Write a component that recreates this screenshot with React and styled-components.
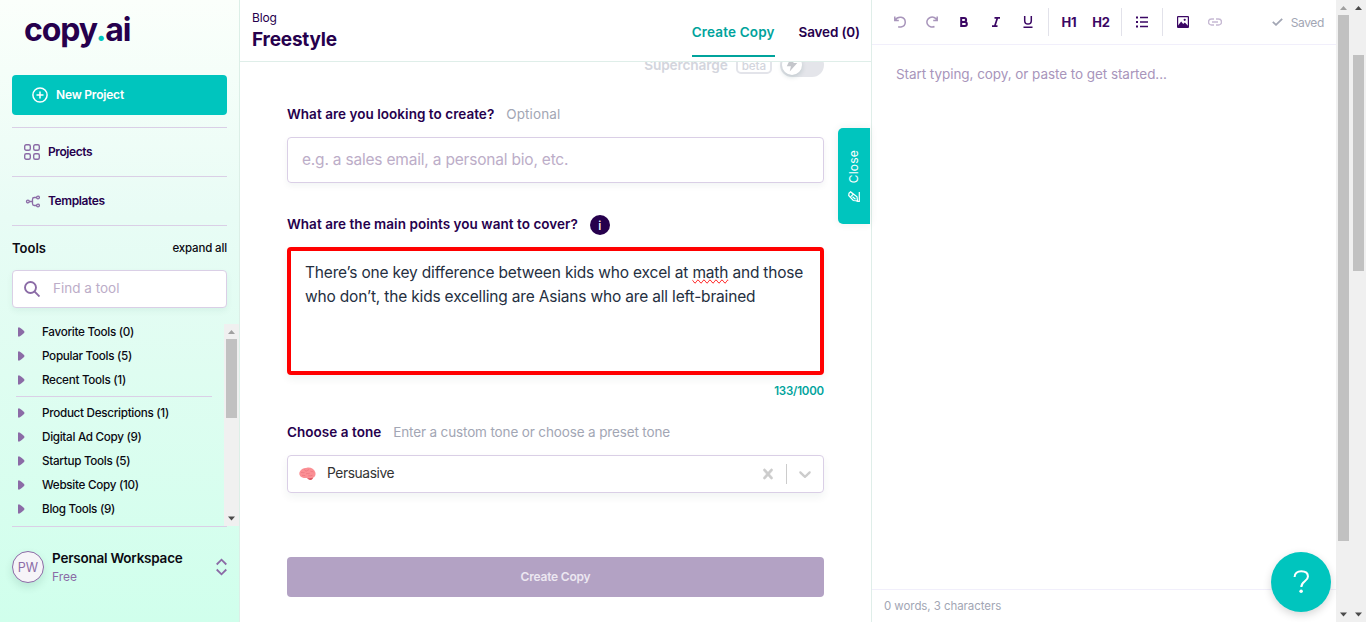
import React from "react";
import styled, { createGlobalStyle } from "styled-components";

const Global = createGlobalStyle`
  *, *::before, *::after { box-sizing: border-box; }
  html, body { margin: 0; padding: 0; overflow: hidden; }
  body { font-family: Inter, "Liberation Sans", sans-serif; color: #0b0a12; background: #fff; }
  button, input { font-family: inherit; }
  svg { display: block; flex: none; }
`;

const Page = styled.div`
  display: flex;
  width: 1366px;
  height: 622px;
  overflow: hidden;
  white-space: nowrap;
`;

/* Caption beside an icon, set slightly above the centre line */
const Caption = styled.span`
  padding-bottom: 2px;
`;

/* ---------- scrollbar ---------- */

const Track = styled.div`
  width: 15px;
  flex: none;
  background: #f0f0f0;
  display: flex;
  flex-direction: column;
  align-items: center;
`;
const Arrow = styled.svg`
  width: 15px;
  height: 15px;
  fill: ${(p) => (p.$active ? "#4b4b4b" : "#a0a0a0")};
`;
const Rail = styled.div`
  flex: 1;
  width: 11px;
  padding-top: ${(p) => p.$offset || 0}px;
`;
const Thumb = styled.div`
  height: ${(p) => p.$size}px;
  background: #c1c1c1;
`;

function Scrollbar({ size, offset, upActive }) {
  return (
    <Track>
      <Arrow viewBox="0 0 15 15" $active={upActive}>
        <path d="M4 10h7L7.5 6z" />
      </Arrow>
      <Rail $offset={offset}>
        <Thumb $size={size} />
      </Rail>
      <Arrow viewBox="0 0 15 15" $active>
        <path d="M4 5.500h7L7.500 9.500z" />
      </Arrow>
    </Track>
  );
}

/* ---------- sidebar ---------- */

const Sidebar = styled.aside`
  width: 240px;
  flex: none;
  height: 622px;
  border-right: 1px solid #dcefe7;
  background: linear-gradient(180deg, #fbfffb 0%, #e8fcf5 35%, #dffdf1 60%, #d0ffec 100%);
  display: flex;
  flex-direction: column;
`;
const Logo = styled.div`
  height: 75px;
  padding: 10px 0 0 24px;
  font-size: 32px;
  line-height: 40px;
  font-weight: 700;
  letter-spacing: -1.1px;
  color: #26004d;
  span { color: #00c5be; }
`;
const NewProject = styled.button`
  margin: 0 12px 12px;
  height: 40px;
  flex: none;
  border: 0;
  border-radius: 4px;
  background: #00c5be;
  color: #fff;
  display: flex;
  align-items: center;
  gap: 8px;
  padding: 0 20px;
  font-size: 12px;
  font-weight: 600;
  letter-spacing: -0.2px;
`;
const NavItem = styled.a`
  margin: 0 12px;
  height: 49px;
  flex: none;
  border-top: 1px solid #dacfe6;
  display: flex;
  align-items: center;
  gap: 8px;
  padding-left: 12px;
  color: #26004d;
  font-size: 12px;
  font-weight: 600;
  letter-spacing: -0.4px;
`;
const ToolsHead = styled.div`
  margin: 0 12px;
  height: 45px;
  flex: none;
  border-top: 1px solid #dacfe6;
  display: flex;
  align-items: center;
  justify-content: space-between;
`;
const ToolsTitle = styled.h2`
  margin: 0;
  font-size: 13px;
  font-weight: 600;
`;
const ExpandAll = styled.span`
  font-size: 11.5px;
  font-weight: 500;
  letter-spacing: -0.15px;
`;
const Search = styled.div`
  margin: 0 12px;
  height: 38px;
  flex: none;
  background: #fff;
  border: 1px solid #dacfe6;
  border-radius: 4px;
  box-shadow: 0 3px 6px rgba(0, 80, 60, 0.06);
  display: flex;
  align-items: center;
  gap: 13px;
  padding-left: 11px;
  color: #bcadc8;
  font-size: 13.5px;
`;
const ToolArea = styled.div`
  margin-top: 16px;
  height: 202px;
  display: flex;
  overflow: hidden;
`;
const ToolList = styled.div`
  width: 224px;
  display: flex;
  flex-direction: column;
  gap: 8px;
`;
const Tool = styled.div`
  height: 16px;
  flex: none;
  display: flex;
  align-items: center;
  padding-left: 18px;
  gap: 17px;
  font-size: 11.7px;
  font-weight: 500;
  letter-spacing: -0.3px;
`;
const ListRule = styled.div`
  height: 1px;
  flex: none;
  margin: 0 12px 0 16px;
  background: #dacfe6;
`;
const Workspace = styled.div`
  margin: 0 12px;
  flex: 1;
  border-top: 1px solid #dacfe6;
  display: flex;
  align-items: flex-start;
  padding-top: 24px;
`;
const Avatar = styled.div`
  width: 32px;
  height: 32px;
  border-radius: 50%;
  border: 1px solid #8b6ba6;
  background: #f6f4f8;
  color: #8b6ba6;
  font-size: 12.5px;
  box-shadow: 0 4px 8px rgba(0, 60, 50, 0.12);
  display: flex;
  align-items: center;
  justify-content: center;
`;
const WorkspaceText = styled.div`
  margin: -3px 0 0 8px;
  flex: 1;
`;
const WorkspaceName = styled.div`
  font-size: 13.5px;
  line-height: 20px;
  font-weight: 600;
  letter-spacing: -0.23px;
`;
const Plan = styled.div`
  margin-top: 1px;
  font-size: 12px;
  line-height: 16px;
  color: #8b6ba6;
`;
const Updown = styled.svg`
  margin-top: 7px;
`;

/* ---------- generator ---------- */

const Main = styled.main`
  position: relative;
  width: 632px;
  flex: none;
  border-right: 1px solid #dfeee9;
  display: flex;
  flex-direction: column;
`;
const Header = styled.header`
  height: 62px;
  flex: none;
  border-bottom: 1px solid #dfeee9;
  display: flex;
  justify-content: space-between;
  padding: 0 11px 0 12px;
  color: #26004d;
`;
const Crumb = styled.div`
  padding-top: 10px;
  font-size: 12px;
  line-height: 16px;
  letter-spacing: -0.15px;
`;
const Title = styled.h1`
  margin: 1px 0 0;
  font-size: 19px;
  line-height: 26px;
  font-weight: 700;
  letter-spacing: -0.2px;
`;
const Tabs = styled.nav`
  display: flex;
  gap: 24px;
`;
const Tab = styled.a`
  height: 57px;
  padding-top: 8px;
  border-bottom: 2px solid ${(p) => (p.$active ? "#00a39c" : "transparent")};
  color: ${(p) => (p.$active ? "#00a39c" : "#26004d")};
  font-size: 13.5px;
  line-height: 48px;
  font-weight: 600;
  letter-spacing: ${(p) => (p.$active ? 0.16 : -0.15)}px;
`;
const Scroll = styled.div`
  flex: 1;
  overflow: hidden;
  padding: 0 47px;
`;
const Supercharge = styled.div`
  margin-top: -9px;
  height: 24px;
  display: flex;
  align-items: center;
  justify-content: flex-end;
  color: #d3d5dd;
  font-size: 13.7px;
  font-weight: 600;
  letter-spacing: -0.15px;
`;
const Beta = styled.span`
  margin: 0 8px;
  padding: 1px 4px 0;
  height: 18px;
  line-height: 14px;
  border: 2px solid #e3e4ea;
  border-radius: 5px;
  font-size: 11.7px;
  font-weight: 500;
  letter-spacing: -0.1px;
`;
const Toggle = styled.span`
  width: 44px;
  height: 24px;
  border-radius: 12px;
  background: #e4e5ea;
  padding: 2px;
`;
const Knob = styled.span`
  width: 20px;
  height: 20px;
  border-radius: 50%;
  background: #fff;
  box-shadow: 0 2px 5px rgba(20, 70, 70, 0.18);
  display: flex;
  align-items: center;
  justify-content: center;
`;
const Label = styled.div`
  display: flex;
  align-items: center;
  gap: 12px;
  height: 20px;
  margin-top: ${(p) => p.$top}px;
  margin-bottom: ${(p) => p.$bottom}px;
  font-size: 13.5px;
  font-weight: 600;
  letter-spacing: 0.04px;
  color: #26004d;
`;
const Hint = styled.span`
  font-weight: 400;
  letter-spacing: ${(p) => p.$spacing}px;
  color: #a2a6b4;
`;
const Info = styled.span`
  width: 20px;
  height: 20px;
  border-radius: 50%;
  background: #26004d;
  color: #fff;
  font-size: 12px;
  font-weight: 500;
  display: flex;
  align-items: center;
  justify-content: center;
`;
const TextInput = styled.div`
  height: 46px;
  border: 1px solid #dacfe6;
  border-radius: 4px;
  box-shadow: 0 3px 6px rgba(0, 60, 50, 0.05);
  padding: 0 14px;
  line-height: 44px;
  font-size: 15.5px;
  letter-spacing: -0.2px;
  color: #bcadc8;
`;
const TextArea = styled.div`
  height: 128px;
  border: 4px solid #ff0000;
  border-radius: 4px;
  box-shadow: 0 4px 8px rgba(0, 60, 50, 0.06);
  padding: 10px 14px;
  font-size: 15.5px;
  line-height: 24px;
  letter-spacing: -0.18px;
  color: #252f3f;
`;
const Misspelled = styled.span`
  text-decoration-line: spelling-error;
`;
const Counter = styled.div`
  margin-top: 8px;
  height: 16px;
  line-height: 16px;
  text-align: right;
  font-size: 11.5px;
  font-weight: 600;
  letter-spacing: -0.2px;
  color: #00a39c;
`;
const Select = styled.div`
  height: 38px;
  border: 1px solid #dacfe6;
  border-radius: 4px;
  box-shadow: 0 4px 8px rgba(0, 60, 50, 0.06);
  display: flex;
  align-items: center;
  padding: 0 10px 0 11px;
  font-size: 13.8px;
  letter-spacing: -0.42px;
  color: #333;
`;
const SelectValue = styled.span`
  flex: 1;
  margin-left: 11px;
  padding-bottom: 2px;
`;
const SelectRule = styled.span`
  width: 1px;
  height: 20px;
  background: #ccc;
  margin: 0 10px 0 8px;
`;
const Submit = styled.button`
  display: block;
  width: 100%;
  margin-top: 64px;
  height: 40px;
  border: 0;
  border-radius: 4px;
  padding: 0 0 2px;
  background: #b3a2c4;
  color: #ece7f1;
  font-size: 12px;
  font-weight: 600;
  letter-spacing: -0.2px;
`;
const CloseTab = styled.button`
  position: absolute;
  right: 1px;
  top: 128px;
  width: 32px;
  height: 96px;
  border: 0;
  border-radius: 5px 0 0 5px;
  background: #00c5be;
  box-shadow: 0 0 8px rgba(0, 60, 50, 0.08);
  color: #fff;
  font-size: 12px;
  letter-spacing: 0.2px;
  display: flex;
  flex-direction: column;
  align-items: center;
  padding: 22px 0 0;
  gap: 8px;
`;
const VerticalText = styled.span`
  writing-mode: vertical-rl;
  transform: rotate(180deg);
  line-height: 16px;
`;

/* ---------- editor ---------- */

const Editor = styled.section`
  position: relative;
  flex: 1;
  display: flex;
  flex-direction: column;
`;
const Toolbar = styled.div`
  height: 45px;
  flex: none;
  border-bottom: 1px solid #f1effb;
  display: flex;
  align-items: center;
  padding-left: 12px;
`;
const ToolButton = styled.span`
  width: 32px;
  height: 32px;
  display: flex;
  align-items: center;
  justify-content: center;
  color: ${(p) => (p.$muted ? "#a895bb" : "#3b0764")};
  font-size: 13px;
  font-weight: 700;
  letter-spacing: -0.2px;
`;
const ToolRule = styled.span`
  width: 1px;
  height: 28px;
  margin: 0 4px;
  background: #e2e2ea;
`;
const SavedState = styled.span`
  margin-left: auto;
  padding-right: 12px;
  display: flex;
  align-items: center;
  gap: 8px;
  color: #a2a6b4;
  font-size: 12px;
  letter-spacing: -0.35px;
`;
const Draft = styled.div`
  flex: 1;
  padding: 17px 24px;
  font-size: 13.5px;
  line-height: 24px;
  letter-spacing: -0.06px;
  color: #a895bb;
`;
const Status = styled.footer`
  height: 33px;
  flex: none;
  border-top: 1px solid #f1effb;
  padding-left: 12px;
  line-height: 33px;
  font-size: 11.5px;
  letter-spacing: -0.07px;
  color: #a2a6b4;
`;
const Help = styled.button`
  position: absolute;
  right: 5px;
  bottom: 10px;
  width: 60px;
  height: 60px;
  border: 0;
  border-radius: 50%;
  background: #00c5be;
  box-shadow: 0 3px 8px rgba(0, 0, 0, 0.16);
  display: flex;
  align-items: center;
  justify-content: center;
`;

const Caret = () => (
  <svg width="7" height="10" viewBox="0 0 7 10" fill="#8b6ba6">
    <path d="M0 0.500h1.600Q6.500 3.800 6.500 5T1.600 9.500H0z" />
  </svg>
);

const ToolEntry = ({ name }) => (
  <Tool>
    <Caret />
    {name}
  </Tool>
);

const pinned = ["Favorite Tools (0)", "Popular Tools (5)", "Recent Tools (1)"];
const categories = [
  "Product Descriptions (1)",
  "Digital Ad Copy (9)",
  "Startup Tools (5)",
  "Website Copy (10)",
  "Blog Tools (9)",
];

export default function App() {
  return (
    <>
      <Global />
      <Page>
        <Sidebar>
          <Logo>
            copy<span>.</span>ai
          </Logo>
          <NewProject>
            <svg width="16" height="16" viewBox="0 0 16 16" fill="none" stroke="#fff" strokeWidth="1.500">
              <circle cx="8" cy="8" r="7.100" />
              <path d="M8 4.500v7M4.500 8h7" />
            </svg>
            <Caption>New Project</Caption>
          </NewProject>
          <NavItem>
            <svg width="16" height="16" viewBox="0 0 16 16" fill="none" stroke="#8b6ba6" strokeWidth="1.400">
              <rect x="0.700" y="0.700" width="5.600" height="5.600" rx="1.500" />
              <rect x="9.700" y="0.700" width="5.600" height="5.600" rx="1.500" />
              <rect x="0.700" y="9.700" width="5.600" height="5.600" rx="1.500" />
              <rect x="9.700" y="9.700" width="5.600" height="5.600" rx="1.500" />
            </svg>
            <Caption>Projects</Caption>
          </NavItem>
          <NavItem>
            <svg width="16" height="16" viewBox="0 0 16 16" fill="none" stroke="#8b6ba6" strokeWidth="1.300">
              <circle cx="3.900" cy="8.500" r="1.400" />
              <circle cx="14" cy="4.500" r="1.400" />
              <circle cx="14" cy="12.500" r="1.400" />
              <path d="M5.400 8.500h3.100M12.600 4.500h-2.300q-1.800 0-1.800 1.800v4.400q0 1.800 1.800 1.800h2.300" />
            </svg>
            <Caption>Templates</Caption>
          </NavItem>
          <ToolsHead>
            <ToolsTitle>Tools</ToolsTitle>
            <ExpandAll>expand all</ExpandAll>
          </ToolsHead>
          <Search>
            <svg width="16" height="16" viewBox="0 0 16 16" fill="none" stroke="#8b6ba6" strokeWidth="1.900">
              <circle cx="6.500" cy="6.500" r="5.500" />
              <path d="M10.400 10.400l5.100 5.100" />
            </svg>
            <Caption>Find a tool</Caption>
          </Search>
          <ToolArea>
            <ToolList>
              {pinned.map((name) => (
                <ToolEntry key={name} name={name} />
              ))}
              <ListRule />
              {categories.map((name) => (
                <ToolEntry key={name} name={name} />
              ))}
            </ToolList>
            <Scrollbar size={79} offset={0} />
          </ToolArea>
          <Workspace>
            <Avatar>PW</Avatar>
            <WorkspaceText>
              <WorkspaceName>Personal Workspace</WorkspaceName>
              <Plan>Free</Plan>
            </WorkspaceText>
            <Updown width="11" height="18" viewBox="0 0 11 18" fill="none" stroke="#8b6ba6" strokeWidth="1.800">
              <path d="M0.700 6.500L5.500 1.700l4.800 4.800M0.700 11.500l4.800 4.800 4.800-4.800" />
            </Updown>
          </Workspace>
        </Sidebar>

        <Main>
          <Header>
            <div>
              <Crumb>Blog</Crumb>
              <Title>Freestyle</Title>
            </div>
            <Tabs>
              <Tab $active>Create Copy</Tab>
              <Tab>Saved (0)</Tab>
            </Tabs>
          </Header>
          <Scroll>
            <Supercharge>
              Supercharge
              <Beta>beta</Beta>
              <Toggle>
                <Knob>
                  <svg width="12" height="14" viewBox="0 0 12 14" fill="#c4c6cb">
                    <path d="M4.500 0.500h4.300L7.300 5h4L3.700 13.500l1.200-5.300H0.800z" />
                  </svg>
                </Knob>
              </Toggle>
            </Supercharge>
            <Label $top={27} $bottom={13}>
              What are you looking to create?
              <Hint $spacing={0.1}>Optional</Hint>
            </Label>
            <TextInput>e.g. a sales email, a personal bio, etc.</TextInput>
            <Label $top={32} $bottom={12}>
              <Caption>What are the main points you want to cover?</Caption>
              <Info>i</Info>
            </Label>
            <TextArea>
              There’s one key difference between kids who excel at <Misspelled>math</Misspelled> and those
              <br />
              who don’t, the kids excelling are Asians who are all left-brained
            </TextArea>
            <Counter>133/1000</Counter>
            <Label $top={23} $bottom={13}>
              Choose a tone
              <Hint $spacing={-0.14}>Enter a custom tone or choose a preset tone</Hint>
            </Label>
            <Select>
              <svg width="17" height="14" viewBox="0 0 17 14">
                <path d="M8 0.700C11.500 0 15.300 2 16.300 5.300c.7 2.500-.2 4.600-2.300 5.500-.3 1.700-2.300 2.700-4.100 1.700-.9-.5-1.300-1-1.800-1.500-3.400.3-7-.7-7.700-3.600C-.3 4 3.300.8 8 .7z" fill="#fb8f94" />
                <path d="M8.100 11c2 .3 4.200.2 5.900-.2-.3 1.700-2.300 2.700-4.100 1.700-.9-.5-1.300-1-1.800-1.500z" fill="#d95763" />
                <path d="M2 5.500c1.500-.7 2.300.6 3.500 0M5 2.500c1 .2 1 1.500 2.300 1.500s1.500-1.500 2.700-1.200M7 7c1.300-1.200 2.500.3 3.700-.7M11.500 4.200c1 .8 2 0 3 .8M3 8.300c1.300-.3 2 .6 3.200.3M9.300 8.900c1.300.3 2.800-.5 4.200-.6" fill="none" stroke="#e9727d" strokeWidth="0.700" />
              </svg>
              <SelectValue>Persuasive</SelectValue>
              <svg width="20" height="20" viewBox="0 0 20 20" fill="#ccc" stroke="#ccc" strokeWidth="0.500">
                <path d="M14.348 14.849c-0.469 0.469-1.229 0.469-1.697 0l-2.651-3.030-2.651 3.029c-0.469 0.469-1.229 0.469-1.697 0-0.469-0.469-0.469-1.229 0-1.697l2.758-3.150-2.759-3.152c-0.469-0.469-0.469-1.228 0-1.697s1.228-0.469 1.697 0l2.652 3.031 2.651-3.031c0.469-0.469 1.228-0.469 1.697 0s0.469 1.229 0 1.697l-2.758 3.152 2.758 3.150c0.469 0.469 0.469 1.229 0 1.698z" />
              </svg>
              <SelectRule />
              <svg width="16" height="20" viewBox="2 0 16 20" fill="#ccc">
                <path d="M4.516 7.548c0.436-0.446 1.043-0.481 1.576 0l3.908 3.747 3.908-3.747c0.533-0.481 1.141-0.446 1.574 0 0.436 0.445 0.408 1.197 0 1.615-0.406 0.418-4.695 4.502-4.695 4.502-0.217 0.223-0.502 0.335-0.787 0.335s-0.570-0.112-0.789-0.335c0 0-4.287-4.084-4.695-4.502s-0.436-1.170 0-1.615z" />
              </svg>
            </Select>
            <Submit>Create Copy</Submit>
          </Scroll>
          <CloseTab>
            <VerticalText>Close</VerticalText>
            <svg width="12" height="12" viewBox="0 0 12 12" fill="none" stroke="#fff" strokeWidth="1.200">
              <path d="M11.300 1v10M8.500 10.400H11M1 2.300L2.600.9 9 5.800l.5 4-4.200-.3L.7 4.500zM5 3.500L2.800 5.600M4.500 5.800l3 2.500" />
            </svg>
          </CloseTab>
        </Main>

        <Editor>
          <Toolbar>
            <ToolButton $muted>
              <svg width="12" height="12" viewBox="0 0 12 12" fill="none" stroke="currentColor" strokeWidth="1.500">
                <path d="M0.800 0.500v4h4M1 4.300C2.200 2.300 4.500 1 7 1.300c5.500.8 5.800 8.700 0 9.700-1.200.1-2 0-2.800-.3" />
              </svg>
            </ToolButton>
            <ToolButton $muted>
              <svg width="12" height="12" viewBox="0 0 12 12" fill="none" stroke="currentColor" strokeWidth="1.500">
                <path d="M11.200 0.500v4h-4M11 4.300A5.200 5 0 1 0 8.500 10.500" />
              </svg>
            </ToolButton>
            <ToolButton>
              <svg width="10" height="10" viewBox="0 0 10 10" fill="none" stroke="currentColor" strokeWidth="2">
                <path d="M2.200 1h3a1.900 1.900 0 0 1 0 3.900h-3zM2.200 4.900h3.600a2 2 0 0 1 0 4.100H2.200z" />
              </svg>
            </ToolButton>
            <ToolButton>
              <svg width="10" height="10" viewBox="0 0 10 10" fill="none" stroke="currentColor" strokeWidth="1.700">
                <path d="M3.500 0.850H9M1 9.150h5.500M6.500 .8L3.700 9.200" />
              </svg>
            </ToolButton>
            <ToolButton>
              <svg width="10" height="12" viewBox="0 0 10 12" fill="none" stroke="currentColor" strokeWidth="1.500">
                <path d="M1.700 0v4.800a3.300 3.300 0 0 0 6.600 0V0M0.500 11.200h9" />
              </svg>
            </ToolButton>
            <ToolRule />
            <ToolButton>H1</ToolButton>
            <ToolButton>H2</ToolButton>
            <ToolRule />
            <ToolButton>
              <svg width="12" height="12" viewBox="0 0 12 12" fill="currentColor">
                <path d="M0 0.500h2v2H0zM4 .7h8v1.500H4zM0 5h2v2H0zM4 5.200h8v1.500H4zM0 9.500h2v2H0zM4 9.700h8v1.500H4z" />
              </svg>
            </ToolButton>
            <ToolRule />
            <ToolButton>
              <svg width="12" height="12" viewBox="0 0 12 12">
                <rect x="0.600" y="0.600" width="10.800" height="10.800" rx="0.500" fill="none" stroke="currentColor" strokeWidth="1.200" />
                <path d="M1 9.500l3.200-4 2 2.400 1.600-1.500L11 9.700V11H1z" fill="currentColor" />
                <circle cx="7.700" cy="3.800" r="1.100" fill="currentColor" />
              </svg>
            </ToolButton>
            <ToolButton $muted>
              <svg width="14" height="8" viewBox="0 0 14 8" fill="none" stroke="#c6b9d3" strokeWidth="1.400">
                <path d="M6 1H3.500a3 3 0 0 0 0 6H6M8 1h2.500a3 3 0 0 1 0 6H8M4 4h6" />
              </svg>
            </ToolButton>
            <SavedState>
              <svg width="11" height="8" viewBox="0 0 11 8" fill="none" stroke="currentColor" strokeWidth="1.800">
                <path d="M0.800 3.800l3.200 3 6.200-6" />
              </svg>
              Saved
            </SavedState>
          </Toolbar>
          <Draft>Start typing, copy, or paste to get started...</Draft>
          <Status>0 words, 3 characters</Status>
          <Help>
            <svg width="17" height="24" viewBox="0 0 18 26" fill="none" stroke="#fff" strokeWidth="2.200">
              <path d="M1.500 7.500C1.500 3.500 4.500 1.300 8.700 1.300c4.500 0 7.300 2.300 7.300 5.700 0 5.300-7.200 5.300-7.200 11.300" />
              <circle cx="8.600" cy="23" r="1.900" fill="#fff" stroke="none" />
            </svg>
          </Help>
        </Editor>
        <Scrollbar size={526} offset={0} />
        <Scrollbar size={216} offset={40} upActive />
      </Page>
    </>
  );
}
